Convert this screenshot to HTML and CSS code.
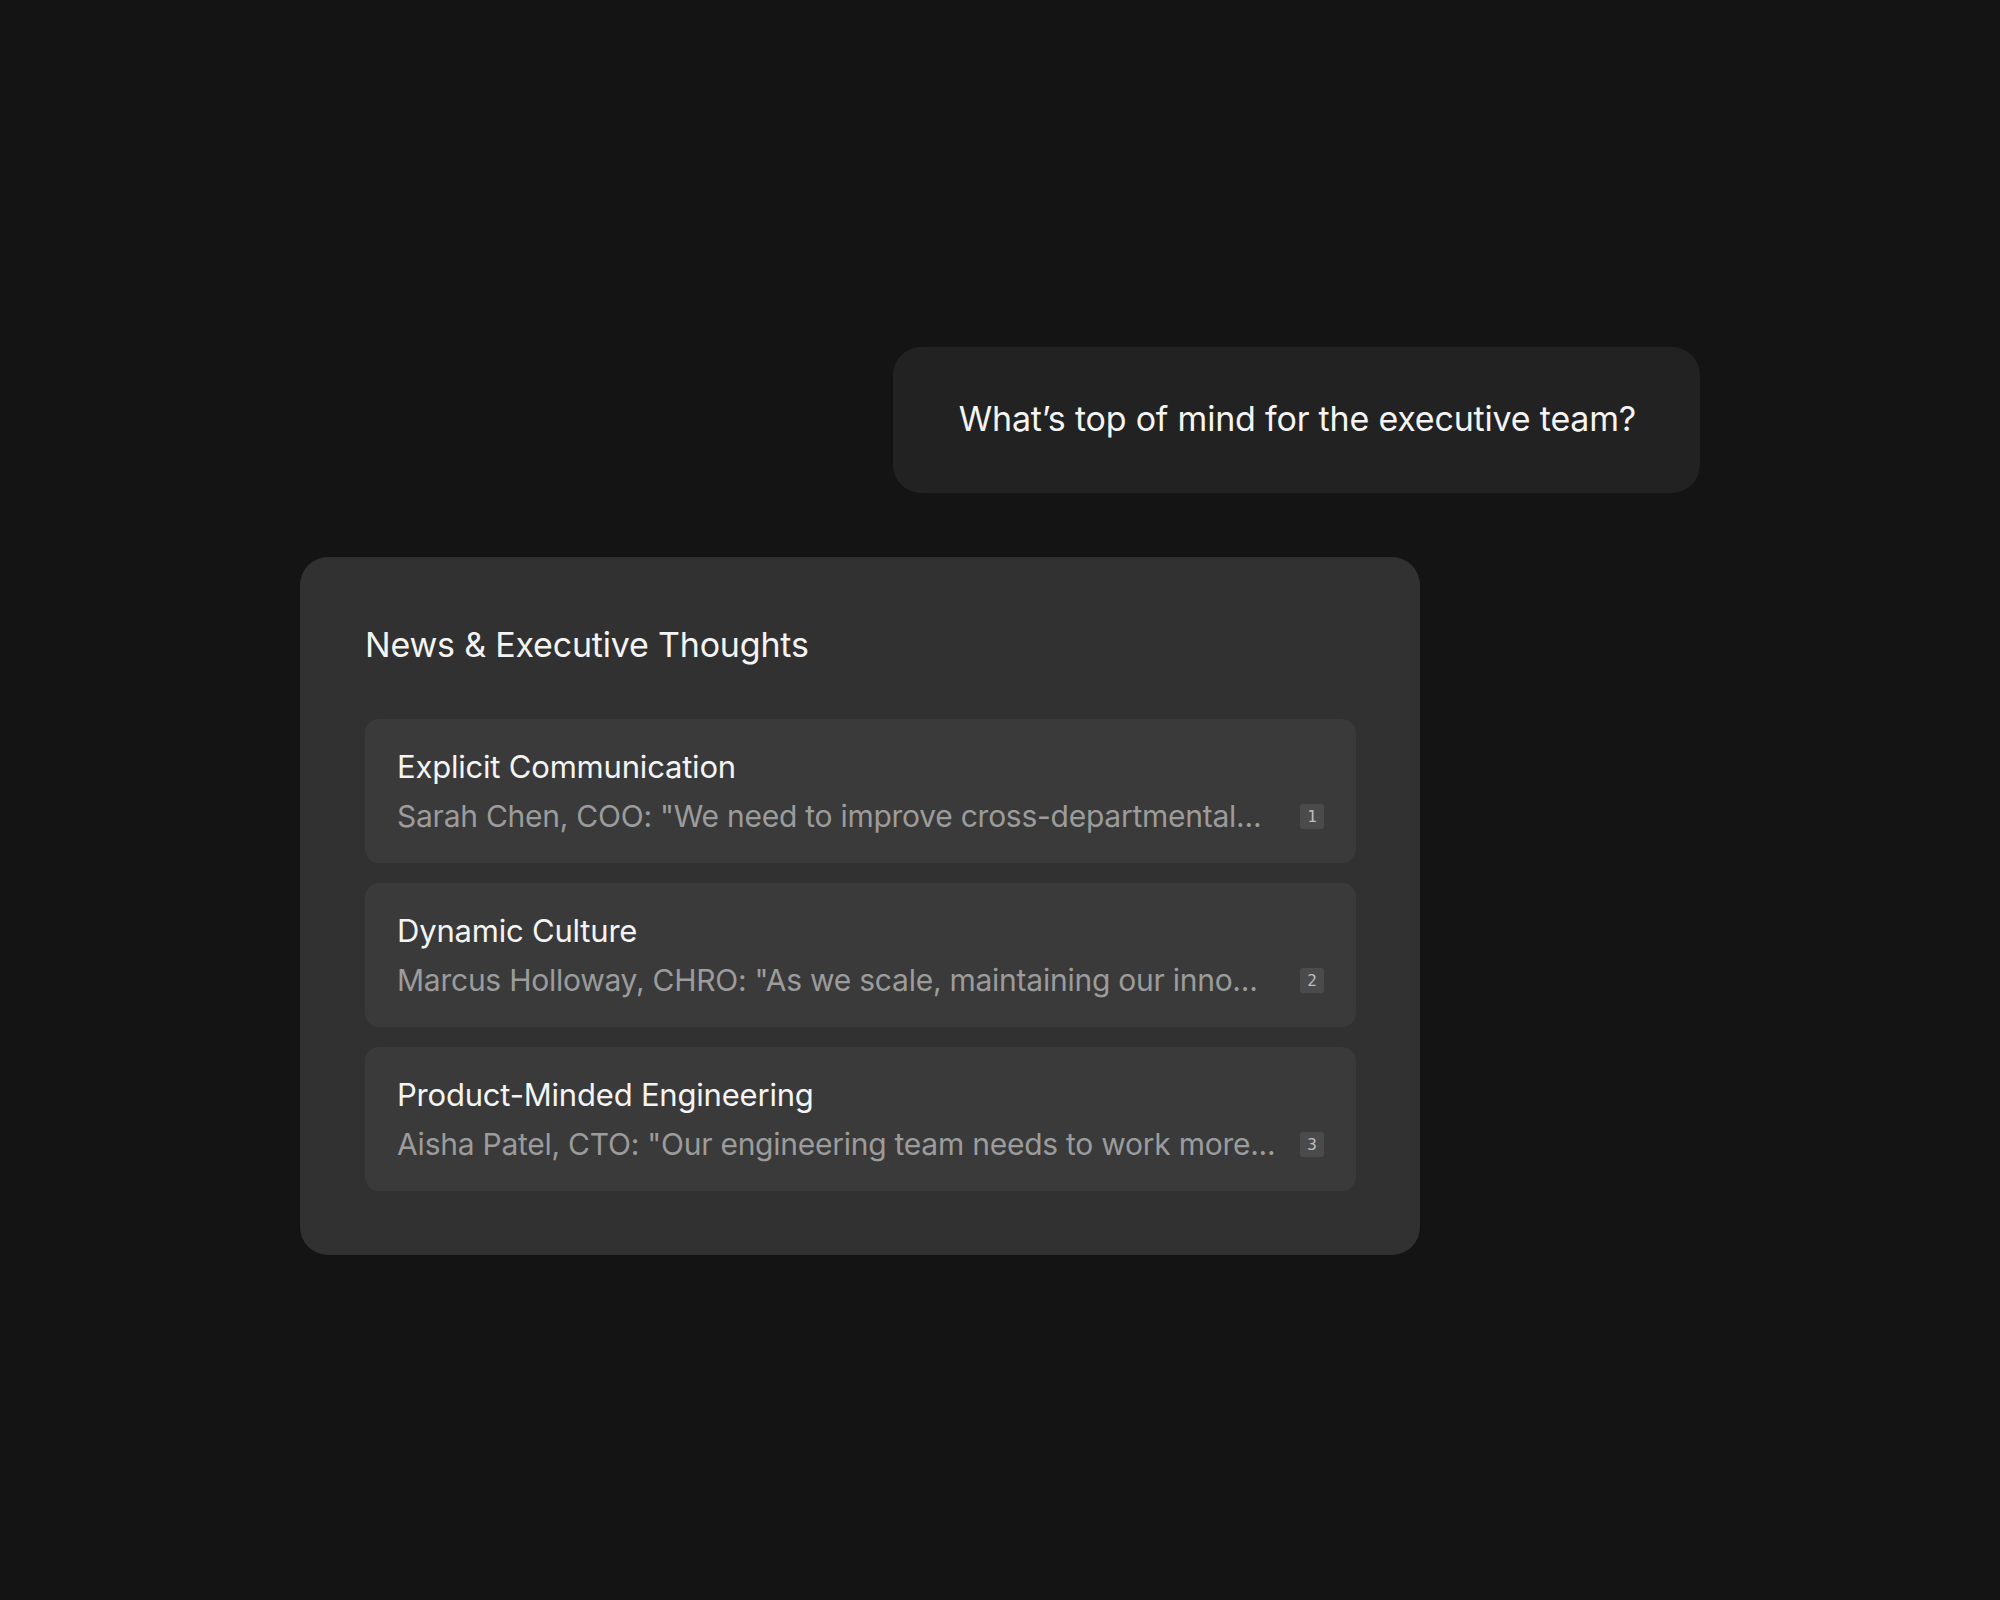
FILE: index.html
```html
<!DOCTYPE html>
<html lang="en">
<head>
<meta charset="utf-8">
<title>Executive Thoughts</title>
<link rel="stylesheet" href="styles.css">
</head>
<body>
<main class="chat">
  <div class="bubble">What’s top of mind for the executive team?</div>
  <section class="card">
    <h2 class="card-title">News &amp; Executive Thoughts</h2>
    <ul class="items">
      <li class="item">
        <div class="item-title">Explicit Communication</div>
        <div class="item-row">
          <span class="item-quote">Sarah Chen, COO: "We need to improve cross-departmental...</span>
          <span class="badge">1</span>
        </div>
      </li>
      <li class="item">
        <div class="item-title">Dynamic Culture</div>
        <div class="item-row">
          <span class="item-quote">Marcus Holloway, CHRO: "As we scale, maintaining our inno...</span>
          <span class="badge">2</span>
        </div>
      </li>
      <li class="item">
        <div class="item-title">Product-Minded Engineering</div>
        <div class="item-row">
          <span class="item-quote">Aisha Patel, CTO: "Our engineering team needs to work more...</span>
          <span class="badge">3</span>
        </div>
      </li>
    </ul>
  </section>
</main>
</body>
</html>
```

FILE: styles.css
```css
html, body {
  margin: 0;
  padding: 0;
  background: #141414;
}

body {
  font-family: Inter, "Noto Sans", "Liberation Sans", sans-serif;
  color: #ffffff;
  min-height: 1600px;
}

.chat {
  width: 1400px;
  margin-left: 300px;
  padding-top: 347px;
  display: flex;
  flex-direction: column;
  gap: 64px;
}

.bubble {
  align-self: flex-end;
  background: #222222;
  border-radius: 28px;
  padding: 52px 64px 54px 66px;
  font-size: 34px;
  line-height: 40px;
  color: #f4f4f4;
  letter-spacing: -0.2px;
}

.card {
  align-self: flex-start;
  width: 1120px;
  box-sizing: border-box;
  background: #313131;
  border-radius: 28px;
  padding: 68px 64px 64px 65px;
}

.card-title {
  margin: 0 0 54px 0;
  font-size: 34px;
  line-height: 40px;
  font-weight: 400;
  color: #f4f4f4;
  letter-spacing: -0.2px;
}

.items {
  list-style: none;
  margin: 0;
  padding: 0;
  display: flex;
  flex-direction: column;
  gap: 20px;
}

.item {
  background: #3a3a3a;
  border-radius: 14px;
  padding: 28px 32px 27px 32px;
  display: flex;
  flex-direction: column;
  gap: 9px;
}

.item-title {
  font-size: 31px;
  line-height: 40px;
  color: #f4f4f4;
  letter-spacing: -0.2px;
}

.item-row {
  display: flex;
  align-items: center;
  gap: 14px;
}

.item-quote {
  flex: 1;
  min-width: 0;
  font-size: 30px;
  line-height: 40px;
  color: #9c9c9c;
  white-space: nowrap;
  overflow: hidden;
  text-overflow: ellipsis;
  letter-spacing: -0.25px;
}

.badge {
  flex: none;
  width: 24px;
  height: 25px;
  border-radius: 3px;
  background: #4b4b4b;
  color: #bdbdbd;
  font-family: "DejaVu Sans Mono", "Liberation Mono", monospace;
  font-size: 16px;
  line-height: 25px;
  text-align: center;
}
```
